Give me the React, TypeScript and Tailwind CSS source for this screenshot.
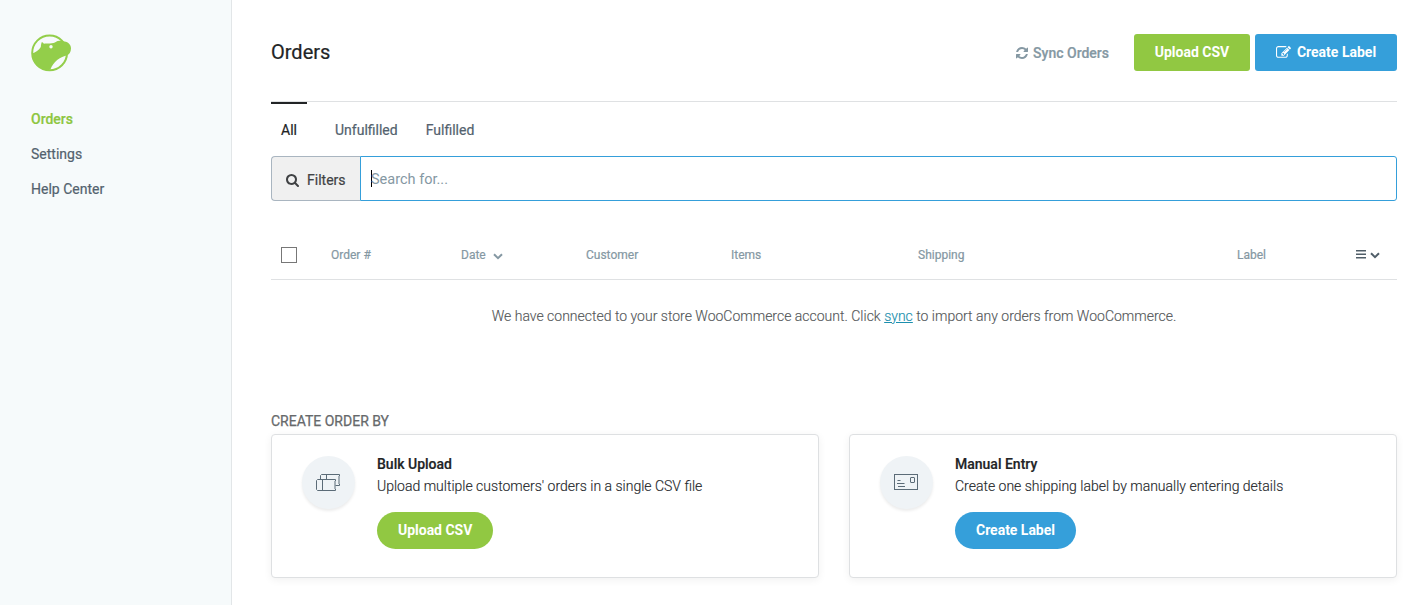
import React from 'react';

function Logo() {
  return (
    <svg width="41" height="38" viewBox="0 0 41 38" className="block">
      <circle cx="18.600" cy="18.900" r="17.400" fill="#f6fafb" stroke="#93ce4a" strokeWidth="2" />
      <path
        d="M1 19.600C4.500 18.300 8 16.200 9.800 13C10 11.200 10.200 9.500 10.900 8.100C11.800 8.600 12.400 9.200 12.900 9.800C15.500 8.900 19 10 22.500 9.100C24.500 8.500 25.500 7 28.500 6.800C30.500 6.600 32 7.200 33.500 7.500C37.500 8 40.200 11 40 14.500C39.800 18 38.500 20.600 35.500 21.600C29 23.200 22.500 27.500 19.300 35.800C8.500 36.800 .5 29 1 19.600Z"
        fill="#93ce4a"
      />
      <circle cx="20" cy="12.800" r="1.700" fill="#f6fafb" />
    </svg>
  );
}

function SyncIcon() {
  return (
    <svg width="12" height="12" viewBox="0 0 1536 1536" fill="currentColor">
      <path d="M1511 928q0 5-1 7-64 268-268 434.5t-478 166.5q-146 0-282.5-55t-243.5-157l-129 129q-19 19-45 19t-45-19-19-45v-448q0-26 19-45t45-19h448q26 0 45 19t19 45-19 45l-137 137q71 66 161 102t187 36q134 0 250-65t186-179q11-17 53-117 8-23 30-23h192q13 0 22.5 9.5t9.5 22.5zm25-800v448q0 26-19 45t-45 19h-448q-26 0-45-19t-19-45 19-45l138-138q-148-137-349-137-134 0-250 65t-186 179q-11 17-53 117-8 23-30 23h-199q-13 0-22.5-9.5t-9.5-22.5v-7q65-268 270-434.5t480-166.5q146 0 284 55.5t245 156.5l130-129q19-19 45-19t45 19 19 45z" />
    </svg>
  );
}

function EditIcon() {
  return (
    <svg width="15" height="15" viewBox="0 0 1792 1792" fill="currentColor">
      <path d="M888 1184l116-116-152-152-116 116v56h96v96h56zm440-720q-16-16-33 1l-350 350q-17 17-1 33t33-1l350-350q17-17 1-33zm80 594v190q0 119-84.5 203.5t-203.5 84.5h-832q-119 0-203.5-84.5t-84.5-203.5v-832q0-119 84.5-203.5t203.5-84.5h832q63 0 117 25 15 7 18 23 3 17-9 29l-49 49q-14 14-32 8-23-6-45-6h-832q-66 0-113 47t-47 113v832q0 66 47 113t113 47h832q66 0 113-47t47-113v-126q0-13 9-22l64-64q15-15 35-7t20 29zm-96-738l288 288-672 672h-288v-288zm444 132l-92 92-288-288 92-92q28-28 68-28t68 28l152 152q28 28 28 68t-28 68z" />
    </svg>
  );
}

function SearchIcon() {
  return (
    <svg width="13" height="13" viewBox="64 128 1664 1664" fill="currentColor">
      <path d="M1216 832q0-185-131.5-316.5t-316.5-131.500-316.500 131.500-131.500 316.500 131.500 316.500 316.500 131.500 316.500-131.500 131.500-316.500zm512 832q0 52-38 90t-90 38q-54 0-90-38l-343-342q-179 124-399 124-143 0-273.500-55.500t-225-150-150-225-55.500-273.500 55.500-273.500 150-225 225-150 273.500-55.500 273.500 55.500 225 150 150 225 55.500 273.500q0 220-124 399l343 343q37 37 37 90z" />
    </svg>
  );
}

function Chevron() {
  return (
    <svg width="10" height="7" viewBox="0 0 10 7" fill="none" stroke="currentColor" strokeWidth="2">
      <path d="M1 1.200l4 4 4-4" />
    </svg>
  );
}

function BoxesIcon() {
  return (
    <svg width="26" height="16" viewBox="0 0 26 16" fill="none" stroke="#5b6b77" strokeWidth="1" className="overflow-visible">
      <path d="M5.500 5.500v-4l1-1h18v1.500l-1 1 1 1-1 1 1 1-1 1 1 1-1 1 1 1v1.500h-4M11.500 .5v5" />
      <path d="M20.500 5.500h-18l-1 1v9l1 1h18v-1.500l-1-1 1-1-1-1 1-1-1-1 1-1-1-1 1-1zM7.500 5.500v11" />
    </svg>
  );
}

function EnvelopeIcon() {
  return (
    <svg width="24" height="16" viewBox="0 0 24 16" fill="none" stroke="#5b6b77" strokeWidth="1">
      <rect x=".5" y=".5" width="23" height="15" />
      <rect x="16.500" y="3.500" width="4" height="5" rx=".5" />
      <path d="M3.500 6.500h3M3 9.500h7.500M4 12.500h7" />
    </svg>
  );
}

interface CardProps {
  icon: React.ReactNode;
  title: string;
  text: string;
  action: string;
  color: string;
}

function OptionCard({ icon, title, text, action, color }: CardProps) {
  return (
    <section className="flex h-36 w-[548px] rounded border border-[#dee0e2] bg-white pl-[30px] pt-[21px] shadow-[0_2px_8px_rgba(0,0,0,0.06)]">
      <div className="flex size-[53px] items-center justify-center rounded-full bg-[#eff3f6] pb-px pr-px shadow-[0_2px_3px_rgba(0,0,0,0.08)]">
        {icon}
      </div>
      <div className="ml-[22px] text-[14px] leading-[22px] text-[#25282b]">
        <h2 className="-mt-[3px] font-medium text-[#222426] [-webkit-text-stroke:0.2px]">{title}</h2>
        <p className="whitespace-nowrap font-light [-webkit-text-stroke:0.15px]">{text}</p>
        <button className={`mt-[15px] block h-[37px] rounded-full px-[21px] pb-0.5 font-bold tracking-[-0.02px] text-white ${color}`}>{action}</button>
      </div>
    </section>
  );
}

export default function App() {
  return (
    <div className="flex h-[605px] w-[1418px] overflow-hidden bg-white font-['Roboto',sans-serif] text-[14px]">
      <aside className="w-[232px] shrink-0 border-r border-[#e2e6e8] bg-[#f6fafb] pl-[31px] pt-[34px]">
        <Logo />
        <nav className="mt-[30px] flex flex-col text-[#53626e] [-webkit-text-stroke:0.2px]">
          <a className="h-[35px] leading-[35px] font-medium text-[#8dc63f]">Orders</a>
          <a className="h-[35px] leading-[35px]">Settings</a>
          <a className="h-[35px] leading-[35px]">Help Center</a>
        </nav>
      </aside>

      <main className="w-[1165px] shrink-0 pl-[39px] pt-[34px]">
        <header className="flex h-[37px] items-center">
          <h1 className="text-[20px] leading-[37px] text-[#222426] [-webkit-text-stroke:0.2px]">Orders</h1>
          <button className="ml-auto mr-[25px] flex items-center gap-[5px] font-medium leading-5 text-[#8598a3] [-webkit-text-stroke:0.2px]">
            <SyncIcon />
            Sync Orders
          </button>
          <button className="mr-[5px] h-[37px] w-[116px] rounded-[3px] bg-[#91c842] font-bold text-white">Upload CSV</button>
          <button className="flex h-[37px] w-[142px] items-center justify-center gap-1.5 rounded-[3px] bg-[#359fda] font-bold text-white">
            <EditIcon />
            Create Label
          </button>
        </header>

        <div className="mt-[30px] flex h-[55px] border-t border-[#dfe1e3] leading-[52px] text-[#53626e] [-webkit-text-stroke:0.2px]">
          <a className="w-9 border-t-2 border-[#222426] text-center text-[#222426]">All</a>
          <a className="ml-7 pt-0.5">Unfulfilled</a>
          <a className="ml-7 pt-0.5">Fulfilled</a>
        </div>

        <div className="flex h-[45px]">
          <button className="flex w-[89px] items-center gap-2 rounded-l border border-r-0 border-[#a9b5c0] bg-[#f0f0f0] pl-3.5 pt-1 text-[#404244] [-webkit-text-stroke:0.2px]">
            <SearchIcon />
            Filters
          </button>
          <div className="flex flex-1 items-center rounded-r-[3px] border border-[#359fda] pl-2.5 text-[#8598a3]">
            <span className="h-[17px] w-px bg-black" />
            <span className="-ml-px pt-0.5 text-[14.500px]">Search for...</span>
          </div>
        </div>

        <div className="mt-7 grid h-[51px] grid-cols-[60px_130px_125px_145px_187px_319px_119px_41px] items-center border-b border-[#dfe1e3] pt-0.5 text-[12px] text-[#8598a3] [-webkit-text-stroke:0.2px]">
          <span className="ml-2.5 size-4 border border-[#777]" />
          <span>Order #</span>
          <span className="flex items-center gap-[7px]">
            Date
            <span className="pt-0.5"><Chevron /></span>
          </span>
          <span>Customer</span>
          <span>Items</span>
          <span>Shipping</span>
          <span>Label</span>
          <span className="flex items-center gap-1 text-[#505e68]">
            <svg width="10" height="9" viewBox="0 0 10 9" fill="currentColor" className="-mt-0.5">
              <path d="M0 0h10v1.500H0zM0 3.500h10V5H0zM0 7h10v1.500H0z" />
            </svg>
            <Chevron />
          </span>
        </div>

        <p className="mt-[25px] h-[22px] text-center font-light leading-[22px] text-[#55585a] [-webkit-text-stroke:0.15px]">
          We have connected to your store WooCommerce account. Click <a className="text-[#1c8fae] underline">sync</a> to import any orders from WooCommerce.
        </p>

        <h3 className="mt-[82px] h-[25px] leading-6 text-[#66696b] [-webkit-text-stroke:0.25px]">CREATE ORDER BY</h3>
        <div className="flex justify-between">
          <OptionCard icon={<BoxesIcon />} title="Bulk Upload" text="Upload multiple customers' orders in a single CSV file" action="Upload CSV" color="bg-[#91c842]" />
          <OptionCard icon={<EnvelopeIcon />} title="Manual Entry" text="Create one shipping label by manually entering details" action="Create Label" color="bg-[#359fda]" />
        </div>
      </main>
    </div>
  );
}
